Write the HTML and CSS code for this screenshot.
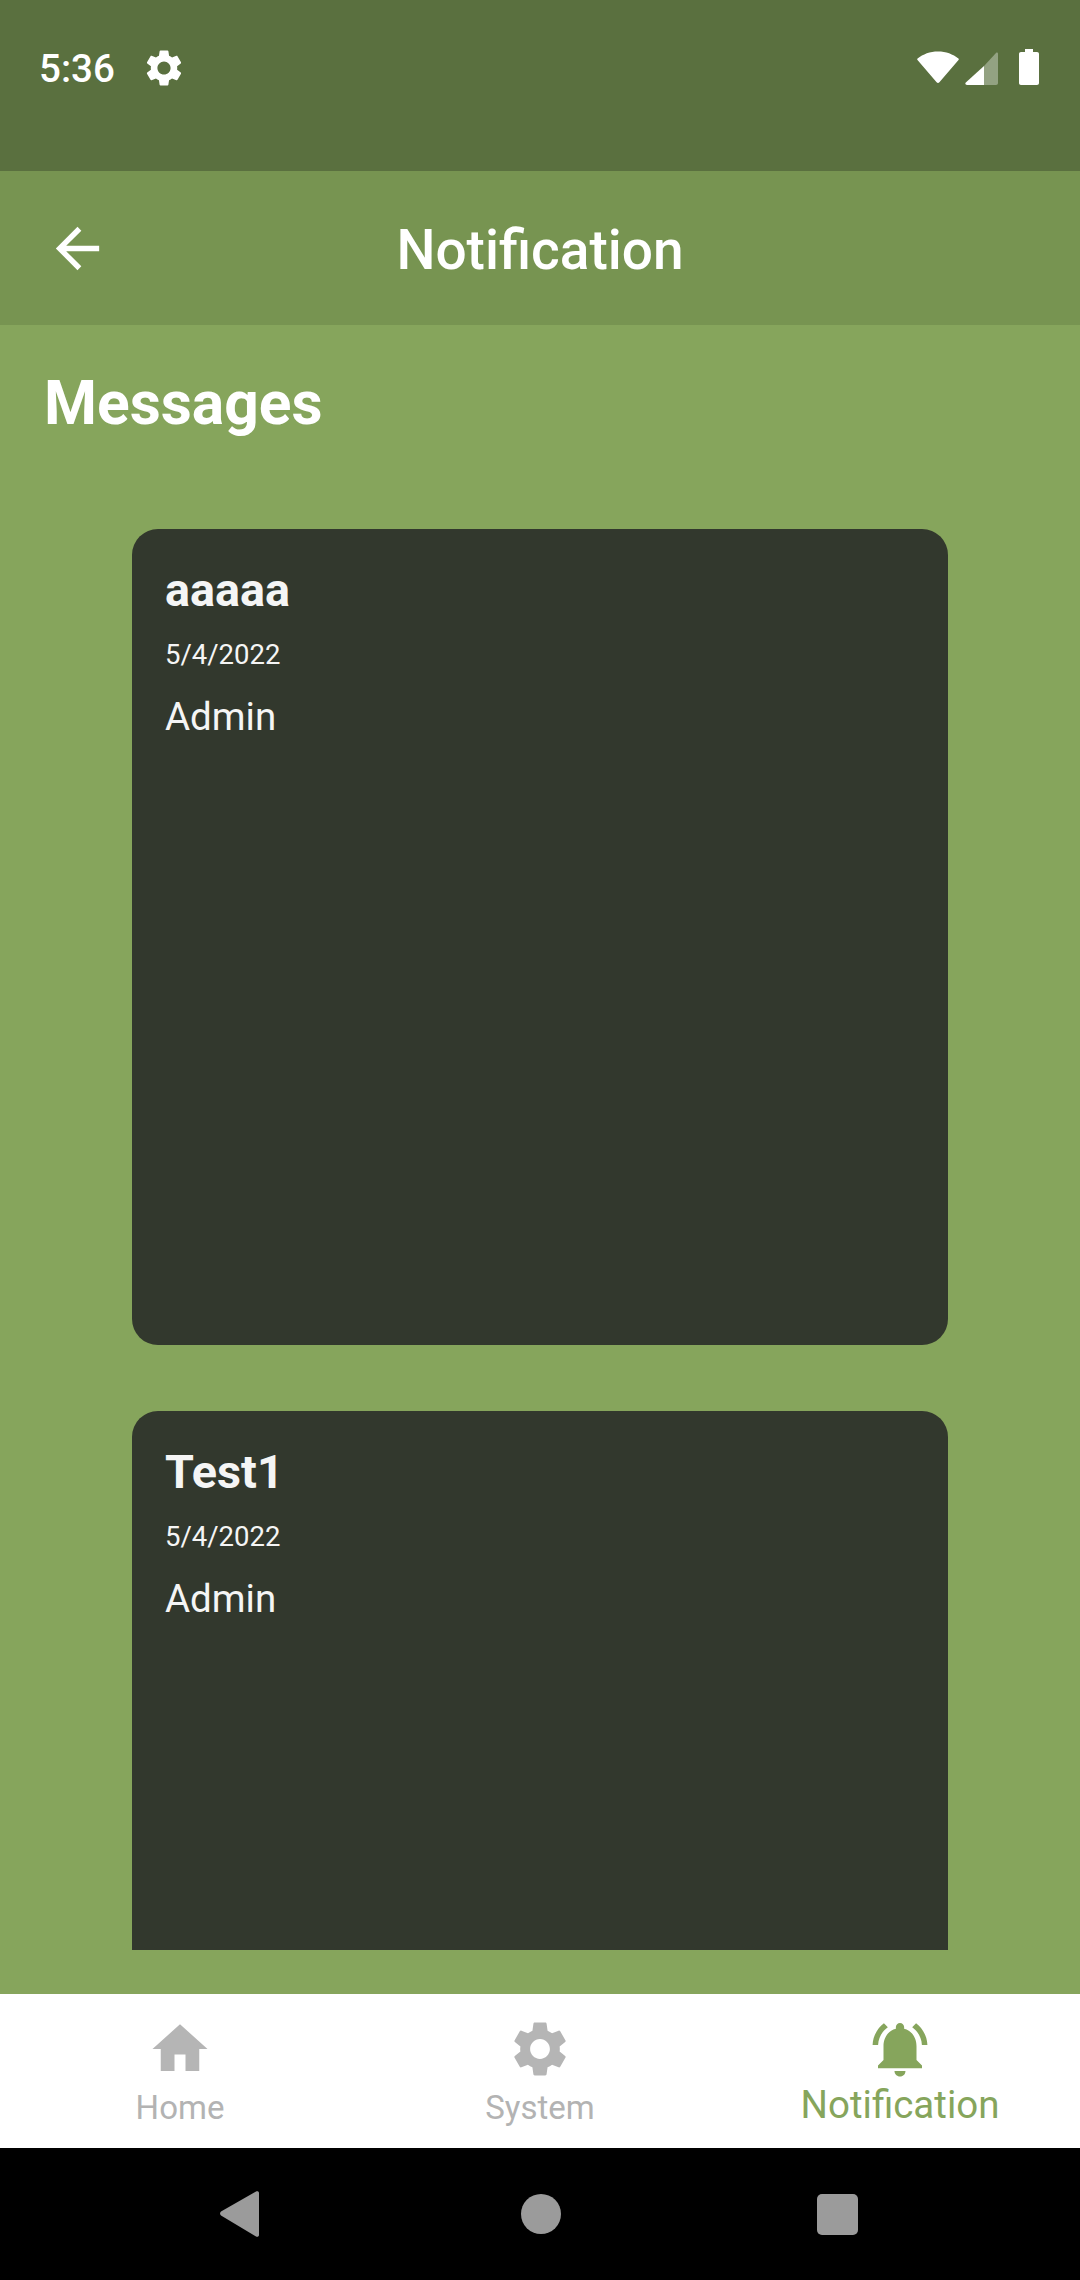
FILE: index.html
```html
<!DOCTYPE html>
<html lang="en">
<head>
    <meta charset="UTF-8">
    <meta name="viewport" content="width=device-width, initial-scale=1.0">
    <title>Notification</title>
    <link rel="stylesheet" href="styles.css">
</head>
<body>

<div class="status-bar">
    <span class="status-time">5:36</span>
    <svg class="status-gear" viewBox="0 0 24 24"><path fill-rule="evenodd" d="M19.14 12.94c.04-.3.06-.61.06-.94 0-.32-.02-.64-.07-.94l2.03-1.58c.18-.14.23-.41.12-.61l-1.92-3.32c-.12-.22-.37-.29-.59-.22l-2.39.96c-.5-.38-1.03-.7-1.62-.94L14.4 2.81c-.04-.24-.24-.41-.48-.41h-3.84c-.24 0-.43.17-.47.41L9.25 5.35c-.59.24-1.13.57-1.62.94l-2.39-.96c-.22-.08-.47 0-.59.22L2.74 8.87c-.12.21-.08.47.12.61l2.03 1.58c-.05.3-.09.63-.09.94s.02.64.07.94l-2.03 1.58c-.18.14-.23.41-.12.61l1.92 3.32c.12.22.37.29.59.22l2.39-.96c.5.38 1.03.7 1.62.94l.36 2.54c.05.24.24.41.48.41h3.84c.24 0 .44-.17.47-.41l.36-2.54c.59-.24 1.13-.56 1.62-.94l2.39.96c.22.08.47 0 .59-.22l1.92-3.32c.12-.22.07-.47-.12-.61l-2.01-1.58zM12 15.6c-1.98 0-3.6-1.62-3.6-3.6s1.62-3.6 3.6-3.6 3.6 1.62 3.6 3.6-1.62 3.6-3.6 3.6z"/></svg>
    <div class="status-icons">
        <svg class="icon-wifi" viewBox="0 0 42 32"><path d="M0.6 7.5C6 3 13 0.4 21 0.4s15 2.6 20.4 7.1c.5.4.5 1 .1 1.5L22.4 31.3c-.8.9-2 .9-2.8 0L.5 9c-.4-.5-.4-1.100.1-1.500z"/></svg>
        <svg class="icon-signal" viewBox="0 0 33 33"><path class="signal-rest" d="M19 14L31 1c.8-.8 2-.3 2 .8V31c0 1-.8 2-2 2H19z"/><path d="M19 14v19H2c-1.500 0-2.200-1.500-1.200-2.600z"/></svg>
        <svg class="icon-battery" viewBox="0 0 20 36"><path d="M6 0h8v3h4c1.200 0 2 .8 2 2v29c0 1.200-.8 2-2 2H2c-1.200 0-2-.8-2-2V5c0-1.200.8-2 2-2h4z"/></svg>
    </div>
</div>

<header class="app-bar">
    <div class="back-btn">
        <svg class="icon-back" viewBox="0 0 24 24"><path d="M20 11H7.830l5.590-5.590L12 4l-8 8 8 8 1.410-1.410L7.830 13H20v-2z"/></svg>
    </div>
    <h1 class="app-title">Notification</h1>
    <div class="back-btn"></div>
</header>

<main class="content">
    <h2 class="section-title">Messages</h2>
    <div class="message-list">
        <div class="message-card">
            <div class="message-title">aaaaa</div>
            <div class="message-date">5/4/2022</div>
            <div class="message-author">Admin</div>
        </div>
        <div class="message-card">
            <div class="message-title">Test1</div>
            <div class="message-date">5/4/2022</div>
            <div class="message-author">Admin</div>
        </div>
    </div>
</main>

<nav class="tab-bar">
    <div class="tab">
        <svg class="tab-icon" viewBox="0 0 24 24"><path d="M10 20v-6h4v6h5v-8h3L12 3 2 12h3v8z"/></svg>
        <span class="tab-label">Home</span>
    </div>
    <div class="tab">
        <svg class="tab-icon" viewBox="0 0 24 24"><path fill-rule="evenodd" d="M19.14 12.94c.04-.3.06-.61.06-.94 0-.32-.02-.64-.07-.94l2.03-1.58c.18-.14.23-.41.12-.61l-1.92-3.32c-.12-.22-.37-.29-.59-.22l-2.39.96c-.5-.38-1.03-.7-1.62-.94L14.4 2.81c-.04-.24-.24-.41-.48-.41h-3.84c-.24 0-.43.17-.47.41L9.25 5.35c-.59.24-1.13.57-1.62.94l-2.39-.96c-.22-.08-.47 0-.59.22L2.74 8.87c-.12.21-.08.47.12.61l2.03 1.58c-.05.3-.09.63-.09.94s.02.64.07.94l-2.03 1.58c-.18.14-.23.41-.12.61l1.92 3.32c.12.22.37.29.59.22l2.39-.96c.5.38 1.03.7 1.62.94l.36 2.54c.05.24.24.41.48.41h3.84c.24 0 .44-.17.47-.41l.36-2.54c.59-.24 1.13-.56 1.62-.94l2.39.96c.22.08.47 0 .59-.22l1.92-3.32c.12-.22.07-.47-.12-.61l-2.01-1.58zM12 15.6c-1.98 0-3.6-1.62-3.6-3.6s1.62-3.6 3.6-3.6 3.6 1.62 3.6 3.6-1.62 3.6-3.6 3.6z"/></svg>
        <span class="tab-label">System</span>
    </div>
    <div class="tab tab-active">
        <svg class="tab-icon" viewBox="0 0 24 24"><path d="M7.580 4.080L6.150 2.650C3.750 4.480 2.170 7.300 2.030 10.500h2c.15-2.650 1.510-4.970 3.550-6.420zm12.390 6.420h2c-.15-3.200-1.730-6.020-4.120-7.850l-1.420 1.430c2.020 1.450 3.390 3.770 3.540 6.420zM18 11c0-3.070-1.640-5.640-4.500-6.320V4c0-.83-.67-1.500-1.500-1.500s-1.500.67-1.500 1.500v.68C7.630 5.360 6 7.920 6 11v5l-2 2v1h16v-1l-2-2v-5zm-6 11c.14 0 .27-.01.4-.04.65-.14 1.180-.58 1.440-1.180.1-.24.15-.5.15-.78h-4c.01 1.100.9 2 2.010 2z"/></svg>
        <span class="tab-label">Notification</span>
    </div>
</nav>

<div class="system-nav">
    <svg class="sys-back" viewBox="0 0 39 46"><path d="M36 .6L1 20.500c-1.300 1-1.300 3 0 4L36 45.400c1.300.9 3 .2 3-1.400V2c0-1.600-1.700-2.300-3-1.400z"/></svg>
    <div class="sys-home"></div>
    <div class="sys-recent"></div>
</div>

</body>
</html>
```

FILE: styles.css
```css
body {
    font-family: Roboto, "Liberation Sans", sans-serif;
    margin: 0;
    width: 1080px;
    height: 2280px;
    display: flex;
    flex-direction: column;
    overflow: hidden;
    background-color: #86a55c;
    color: #fff;
}

/* status bar */
.status-bar {
    height: 171px;
    box-sizing: border-box;
    padding: 46px 41px 0 39px;
    display: flex;
    align-items: flex-start;
    background-color: #5a703f;
}
.status-time {
    font-size: 38.5px;
    line-height: 46px;
    font-weight: 500;
}
.status-gear {
    width: 44px;
    height: 44px;
    margin: 0 0 0 27px;
    fill: #fff;
}
.status-icons {
    margin-left: auto;
    margin-top: -2px;
    display: flex;
    align-items: flex-start;
    height: 46px;
}
.status-icons svg {
    fill: #fff;
}
.icon-wifi {
    width: 42px;
    height: 32px;
    margin-top: 7px;
}
.icon-signal {
    width: 33px;
    height: 33px;
    margin: 8px 0 0 6px;
}
.icon-signal .signal-rest {
    fill: rgba(255, 255, 255, 0.35);
}
.icon-battery {
    width: 20px;
    height: 36px;
    margin: 5px 0 0 21px;
}

/* app bar */
.app-bar {
    height: 154px;
    display: flex;
    align-items: center;
    background-color: #779451;
}
.back-btn {
    width: 154px;
    display: flex;
    justify-content: center;
}
.icon-back {
    width: 65px;
    height: 65px;
    fill: #fff;
}
.app-title {
    flex: 1;
    margin: 0;
    padding-top: 4px;
    text-align: center;
    font-size: 55px;
    font-weight: 500;
}

/* messages */
.content {
    flex: 1;
    min-height: 0;
    display: flex;
    flex-direction: column;
    padding-bottom: 44px;
}
.section-title {
    margin: 0;
    padding: 43px 44px 0;
    height: 162px;
    box-sizing: border-box;
    font-size: 60.5px;
    line-height: 72px;
    font-weight: 700;
}
.message-list {
    flex: 1;
    min-height: 0;
    overflow: hidden;
    margin-top: 42px;
}
.message-card {
    width: 816px;
    height: 816px;
    box-sizing: border-box;
    margin: 0 auto 66px;
    padding: 35px 33px;
    border-radius: 26px;
    background-color: #32382d;
    color: #f5f5f5;
}
.message-title {
    font-size: 46.75px;
    line-height: 52px;
    font-weight: 700;
}
.message-date {
    margin-top: 23px;
    font-size: 27.5px;
    line-height: 32px;
}
.message-author {
    margin-top: 24px;
    font-size: 38.5px;
    line-height: 44px;
}

/* bottom tabs */
.tab-bar {
    height: 154px;
    flex-shrink: 0;
    display: flex;
    background-color: #fff;
}
.tab {
    flex: 1;
    display: flex;
    flex-direction: column;
    align-items: center;
    padding-top: 22px;
    color: #b3b3b3;
}
.tab-icon {
    width: 66px;
    height: 66px;
    fill: #b5b5b5;
}
.tab-label {
    font-size: 33px;
    line-height: 38px;
    margin-top: 7px;
}
.tab-active {
    color: #86a55c;
}
.tab-active .tab-icon {
    fill: #86a55c;
}
.tab-active .tab-label {
    font-size: 38.5px;
    line-height: 44px;
    margin-top: 1px;
}

/* android buttons */
.system-nav {
    height: 132px;
    flex-shrink: 0;
    display: flex;
    align-items: center;
    justify-content: center;
    background-color: #000;
}
.sys-back {
    width: 39px;
    height: 46px;
    margin-right: 262px;
    fill: #9b9b9b;
}
.sys-home {
    width: 40px;
    height: 40px;
    border-radius: 50%;
    background-color: #9b9b9b;
}
.sys-recent {
    width: 41px;
    height: 41px;
    margin: 0 3px 0 256px;
    border-radius: 5px;
    background-color: #9b9b9b;
}
```
